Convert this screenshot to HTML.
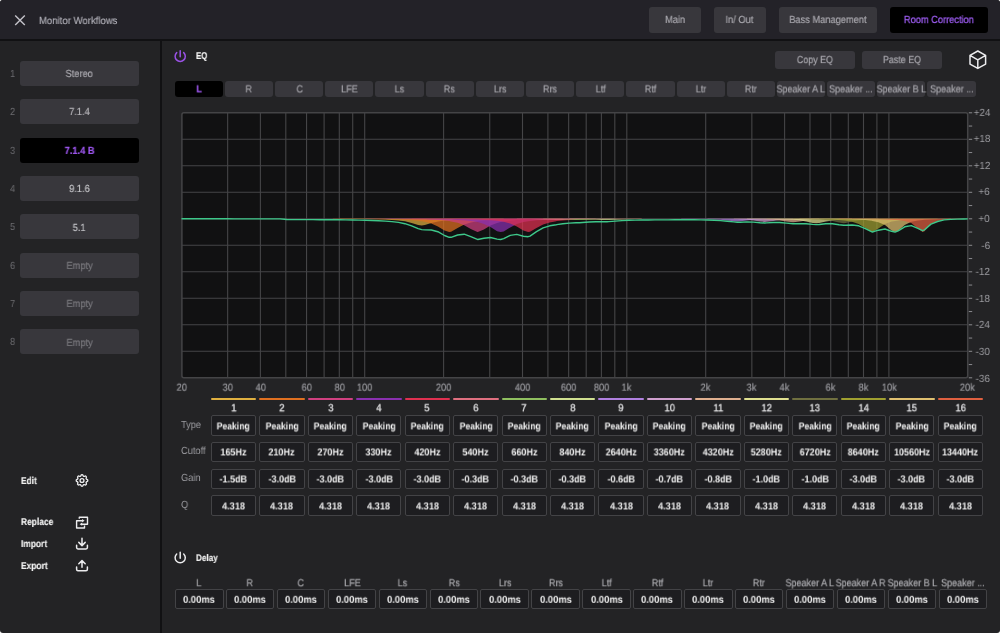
<!DOCTYPE html><html><head><meta charset="utf-8"><style>
html,body{margin:0;padding:0;background:#fff;width:1000px;height:633px;overflow:hidden}
*{box-sizing:border-box}
.win{position:absolute;left:0;top:0;width:1000px;height:633px;text-rendering:geometricPrecision;background:#232325;border-radius:3px;overflow:hidden;font-family:"Liberation Sans",sans-serif;}
.a{position:absolute}
.t{position:absolute;white-space:nowrap;line-height:1;transform-origin:0 0;will-change:transform}
.c{position:absolute;display:flex;align-items:center;justify-content:center;white-space:nowrap}
.c span{display:inline-block;line-height:1;will-change:transform}
.btn{background:#38373c;border-radius:3px;color:#a8a7ad}
.box{border:1px solid #434346;border-radius:2px;background:#1d1d20;color:#f2f2f2;font-weight:700}
.md{-webkit-text-stroke:0.2px currentColor}

</style></head><body><div class="win">
<div class="a" style="left:0;top:0;width:1000px;height:39px;background:#232228"></div>
<div class="a" style="left:0;top:39px;width:1000px;height:2px;background:#111113"></div>
<div class="a" style="left:160px;top:41px;width:2px;height:600px;background:#111113"></div>
<div class="t" style="left:39.30px;top:17.40px;font-size:10.30px;transform:scaleX(0.928);color:#b2b1b9;-webkit-text-stroke:0.15px #b2b1b9">Monitor Workflows</div>
<div class="c btn md" style="left:649.00px;top:7.00px;width:51.50px;height:26.00px;font-size:10.30px;"><span style="transform:translateY(1.00px) scaleX(0.900)">Main</span></div>
<div class="c btn md" style="left:714.00px;top:7.00px;width:51.50px;height:26.00px;font-size:10.30px;"><span style="transform:translateY(1.00px) scaleX(0.900)">In/ Out</span></div>
<div class="c btn md" style="left:778.80px;top:7.00px;width:98.20px;height:26.00px;font-size:10.30px;"><span style="transform:translateY(1.00px) scaleX(0.900)">Bass Management</span></div>
<div class="c btn md" style="left:890.00px;top:7.00px;width:98.00px;height:26.00px;font-size:10.30px;background:#000;color:#9c5cf0;-webkit-text-stroke:0.3px #9c5cf0;"><span style="transform:translateY(1.00px) scaleX(0.900)">Room Correction</span></div>
<div class="t" style="left:10.20px;top:69.80px;font-size:10.30px;transform:scaleX(0.900);color:#6c6c70">1</div>
<div class="c btn md" style="left:20.00px;top:60.80px;width:119.00px;height:25.00px;font-size:10.30px;color:#a8a7ad;"><span style="transform:translateY(2.00px) scaleX(0.900)">Stereo</span></div>
<div class="t" style="left:10.20px;top:108.15px;font-size:10.30px;transform:scaleX(0.900);color:#6c6c70">2</div>
<div class="c btn md" style="left:20.00px;top:99.15px;width:119.00px;height:25.00px;font-size:10.30px;color:#b2b1b6;"><span style="transform:translateY(2.00px) scaleX(0.900)">7.1.4</span></div>
<div class="t" style="left:10.20px;top:146.50px;font-size:10.30px;transform:scaleX(0.900);color:#6c6c70">3</div>
<div class="c btn md" style="left:20.00px;top:137.50px;width:119.00px;height:25.00px;font-size:10.30px;color:#9a55ea;background:#000;font-weight:700;"><span style="transform:translateY(2.00px) scaleX(0.900)">7.1.4 B</span></div>
<div class="t" style="left:10.20px;top:184.85px;font-size:10.30px;transform:scaleX(0.900);color:#6c6c70">4</div>
<div class="c btn md" style="left:20.00px;top:175.85px;width:119.00px;height:25.00px;font-size:10.30px;color:#c2c2c6;"><span style="transform:translateY(2.00px) scaleX(0.900)">9.1.6</span></div>
<div class="t" style="left:10.20px;top:223.20px;font-size:10.30px;transform:scaleX(0.900);color:#6c6c70">5</div>
<div class="c btn md" style="left:20.00px;top:214.20px;width:119.00px;height:25.00px;font-size:10.30px;color:#c2c2c6;"><span style="transform:translateY(2.00px) scaleX(0.900)">5.1</span></div>
<div class="t" style="left:10.20px;top:261.55px;font-size:10.30px;transform:scaleX(0.900);color:#6c6c70">6</div>
<div class="c btn md" style="left:20.00px;top:252.55px;width:119.00px;height:25.00px;font-size:10.30px;color:#7a797e;"><span style="transform:translateY(2.00px) scaleX(0.900)">Empty</span></div>
<div class="t" style="left:10.20px;top:299.90px;font-size:10.30px;transform:scaleX(0.900);color:#6c6c70">7</div>
<div class="c btn md" style="left:20.00px;top:290.90px;width:119.00px;height:25.00px;font-size:10.30px;color:#7a797e;"><span style="transform:translateY(2.00px) scaleX(0.900)">Empty</span></div>
<div class="t" style="left:10.20px;top:338.25px;font-size:10.30px;transform:scaleX(0.900);color:#6c6c70">8</div>
<div class="c btn md" style="left:20.00px;top:329.25px;width:119.00px;height:25.00px;font-size:10.30px;color:#7a797e;"><span style="transform:translateY(2.00px) scaleX(0.900)">Empty</span></div>
<div class="t" style="left:21.20px;top:476.80px;font-size:9.90px;transform:scaleX(0.851);color:#f0f0f0;font-weight:700;-webkit-text-stroke:0.15px #f0f0f0">Edit</div>
<div class="t" style="left:21.20px;top:518.20px;font-size:9.90px;transform:scaleX(0.851);color:#f0f0f0;font-weight:700;-webkit-text-stroke:0.15px #f0f0f0">Replace</div>
<div class="t" style="left:21.20px;top:539.90px;font-size:9.90px;transform:scaleX(0.851);color:#f0f0f0;font-weight:700;-webkit-text-stroke:0.15px #f0f0f0">Import</div>
<div class="t" style="left:21.20px;top:561.60px;font-size:9.90px;transform:scaleX(0.851);color:#f0f0f0;font-weight:700;-webkit-text-stroke:0.15px #f0f0f0">Export</div>
<div class="t" style="left:195.80px;top:52.00px;font-size:9.80px;transform:scaleX(0.800);color:#f6f6f6;font-weight:700;-webkit-text-stroke:0.15px #f6f6f6">EQ</div>
<div class="c btn md" style="left:775.00px;top:51.00px;width:80.00px;height:18.00px;font-size:10.30px;"><span style="transform:translateY(1.10px) scaleX(0.864)">Copy EQ</span></div>
<div class="c btn md" style="left:862.00px;top:51.00px;width:80.00px;height:18.00px;font-size:10.30px;"><span style="transform:translateY(1.10px) scaleX(0.864)">Paste EQ</span></div>
<div class="c btn md" style="left:174.80px;top:80.70px;width:48.20px;height:16.20px;font-size:10.30px;background:#000;color:#9a55ea;font-weight:700;"><span style="transform:translateY(1.40px) scaleX(0.873)">L</span></div>
<div class="c btn md" style="left:224.97px;top:80.70px;width:48.20px;height:16.20px;font-size:10.30px;"><span style="transform:translateY(1.40px) scaleX(0.873)">R</span></div>
<div class="c btn md" style="left:275.14px;top:80.70px;width:48.20px;height:16.20px;font-size:10.30px;"><span style="transform:translateY(1.40px) scaleX(0.873)">C</span></div>
<div class="c btn md" style="left:325.31px;top:80.70px;width:48.20px;height:16.20px;font-size:10.30px;"><span style="transform:translateY(1.40px) scaleX(0.873)">LFE</span></div>
<div class="c btn md" style="left:375.48px;top:80.70px;width:48.20px;height:16.20px;font-size:10.30px;"><span style="transform:translateY(1.40px) scaleX(0.873)">Ls</span></div>
<div class="c btn md" style="left:425.65px;top:80.70px;width:48.20px;height:16.20px;font-size:10.30px;"><span style="transform:translateY(1.40px) scaleX(0.873)">Rs</span></div>
<div class="c btn md" style="left:475.82px;top:80.70px;width:48.20px;height:16.20px;font-size:10.30px;"><span style="transform:translateY(1.40px) scaleX(0.873)">Lrs</span></div>
<div class="c btn md" style="left:525.99px;top:80.70px;width:48.20px;height:16.20px;font-size:10.30px;"><span style="transform:translateY(1.40px) scaleX(0.873)">Rrs</span></div>
<div class="c btn md" style="left:576.16px;top:80.70px;width:48.20px;height:16.20px;font-size:10.30px;"><span style="transform:translateY(1.40px) scaleX(0.873)">Ltf</span></div>
<div class="c btn md" style="left:626.33px;top:80.70px;width:48.20px;height:16.20px;font-size:10.30px;"><span style="transform:translateY(1.40px) scaleX(0.873)">Rtf</span></div>
<div class="c btn md" style="left:676.50px;top:80.70px;width:48.20px;height:16.20px;font-size:10.30px;"><span style="transform:translateY(1.40px) scaleX(0.873)">Ltr</span></div>
<div class="c btn md" style="left:726.67px;top:80.70px;width:48.20px;height:16.20px;font-size:10.30px;"><span style="transform:translateY(1.40px) scaleX(0.873)">Rtr</span></div>
<div class="c btn md" style="left:776.84px;top:80.70px;width:48.20px;height:16.20px;font-size:10.30px;"><span style="transform:translateY(1.40px) scaleX(0.873)">Speaker A L</span></div>
<div class="c btn md" style="left:827.01px;top:80.70px;width:48.20px;height:16.20px;font-size:10.30px;"><span style="transform:translateY(1.40px) scaleX(0.873)">Speaker ...</span></div>
<div class="c btn md" style="left:877.18px;top:80.70px;width:48.20px;height:16.20px;font-size:10.30px;"><span style="transform:translateY(1.40px) scaleX(0.873)">Speaker B L</span></div>
<div class="c btn md" style="left:927.35px;top:80.70px;width:48.20px;height:16.20px;font-size:10.30px;"><span style="transform:translateY(1.40px) scaleX(0.873)">Speaker ...</span></div>
<svg class="a" style="left:0;top:0" width="1000" height="633">
<rect x="181.9" y="112.80" width="785.8" height="265.00" rx="2" fill="#111112" stroke="#444446" stroke-width="1.5"/>
<line x1="227.65" y1="112.80" x2="227.65" y2="377.80" stroke="#454547" stroke-width="1.1"/>
<line x1="260.40" y1="112.80" x2="260.40" y2="377.80" stroke="#454547" stroke-width="1.1"/>
<line x1="285.80" y1="112.80" x2="285.80" y2="377.80" stroke="#454547" stroke-width="1.1"/>
<line x1="306.55" y1="112.80" x2="306.55" y2="377.80" stroke="#454547" stroke-width="1.1"/>
<line x1="324.10" y1="112.80" x2="324.10" y2="377.80" stroke="#454547" stroke-width="1.1"/>
<line x1="339.30" y1="112.80" x2="339.30" y2="377.80" stroke="#454547" stroke-width="1.1"/>
<line x1="352.71" y1="112.80" x2="352.71" y2="377.80" stroke="#454547" stroke-width="1.1"/>
<line x1="364.70" y1="112.80" x2="364.70" y2="377.80" stroke="#454547" stroke-width="1.1"/>
<line x1="443.60" y1="112.80" x2="443.60" y2="377.80" stroke="#454547" stroke-width="1.1"/>
<line x1="489.75" y1="112.80" x2="489.75" y2="377.80" stroke="#454547" stroke-width="1.1"/>
<line x1="522.50" y1="112.80" x2="522.50" y2="377.80" stroke="#454547" stroke-width="1.1"/>
<line x1="547.90" y1="112.80" x2="547.90" y2="377.80" stroke="#454547" stroke-width="1.1"/>
<line x1="568.65" y1="112.80" x2="568.65" y2="377.80" stroke="#454547" stroke-width="1.1"/>
<line x1="586.20" y1="112.80" x2="586.20" y2="377.80" stroke="#454547" stroke-width="1.1"/>
<line x1="601.40" y1="112.80" x2="601.40" y2="377.80" stroke="#454547" stroke-width="1.1"/>
<line x1="614.81" y1="112.80" x2="614.81" y2="377.80" stroke="#454547" stroke-width="1.1"/>
<line x1="626.80" y1="112.80" x2="626.80" y2="377.80" stroke="#454547" stroke-width="1.1"/>
<line x1="705.70" y1="112.80" x2="705.70" y2="377.80" stroke="#454547" stroke-width="1.1"/>
<line x1="751.85" y1="112.80" x2="751.85" y2="377.80" stroke="#454547" stroke-width="1.1"/>
<line x1="784.60" y1="112.80" x2="784.60" y2="377.80" stroke="#454547" stroke-width="1.1"/>
<line x1="810.00" y1="112.80" x2="810.00" y2="377.80" stroke="#454547" stroke-width="1.1"/>
<line x1="830.75" y1="112.80" x2="830.75" y2="377.80" stroke="#454547" stroke-width="1.1"/>
<line x1="848.30" y1="112.80" x2="848.30" y2="377.80" stroke="#454547" stroke-width="1.1"/>
<line x1="863.50" y1="112.80" x2="863.50" y2="377.80" stroke="#454547" stroke-width="1.1"/>
<line x1="876.91" y1="112.80" x2="876.91" y2="377.80" stroke="#454547" stroke-width="1.1"/>
<line x1="888.90" y1="112.80" x2="888.90" y2="377.80" stroke="#454547" stroke-width="1.1"/>
<line x1="182" y1="139.30" x2="967.6" y2="139.30" stroke="#454547" stroke-width="1.1"/>
<line x1="182" y1="165.80" x2="967.6" y2="165.80" stroke="#454547" stroke-width="1.1"/>
<line x1="182" y1="192.30" x2="967.6" y2="192.30" stroke="#454547" stroke-width="1.1"/>
<line x1="182" y1="218.80" x2="967.6" y2="218.80" stroke="#454547" stroke-width="1.1"/>
<line x1="182" y1="245.30" x2="967.6" y2="245.30" stroke="#454547" stroke-width="1.1"/>
<line x1="182" y1="271.80" x2="967.6" y2="271.80" stroke="#454547" stroke-width="1.1"/>
<line x1="182" y1="298.30" x2="967.6" y2="298.30" stroke="#454547" stroke-width="1.1"/>
<line x1="182" y1="324.80" x2="967.6" y2="324.80" stroke="#454547" stroke-width="1.1"/>
<line x1="182" y1="351.30" x2="967.6" y2="351.30" stroke="#454547" stroke-width="1.1"/>
<path d="M339.3,218.8 L339.3,218.9 L345.9,219.0 L352.4,219.0 L359.0,219.1 L365.6,219.1 L372.2,219.2 L378.7,219.3 L385.3,219.5 L391.9,219.9 L398.5,220.4 L405.0,221.3 L411.6,223.0 L418.2,225.0 L421.7,225.4 L424.8,225.1 L431.3,223.1 L437.9,221.4 L444.5,220.4 L449.2,220.0 L451.1,219.9 L457.6,219.6 L464.2,219.4 L470.8,219.2 L477.4,219.1 L477.8,219.1 L483.9,219.1 L490.5,219.0 L497.1,219.0 L500.6,219.0 L503.7,218.9 L503.7,218.8 Z" fill="#e0b040" fill-opacity="0.72"/>
<path d="M332.7,218.8 L332.7,218.9 L339.3,218.9 L345.9,219.0 L352.4,219.0 L359.0,219.0 L365.6,219.1 L372.2,219.1 L378.7,219.2 L385.3,219.3 L391.9,219.4 L398.5,219.6 L405.0,219.9 L411.6,220.2 L418.2,220.8 L421.7,221.3 L424.8,221.8 L431.3,223.5 L437.9,226.5 L444.5,230.6 L449.2,232.1 L451.1,231.8 L457.6,228.1 L464.2,224.5 L470.8,222.4 L477.4,221.2 L477.8,221.1 L483.9,220.4 L490.5,220.0 L497.1,219.7 L500.6,219.6 L503.7,219.5 L510.2,219.3 L516.8,219.2 L523.4,219.2 L528.1,219.1 L530.0,219.1 L536.5,219.0 L543.1,219.0 L549.7,219.0 L556.3,219.0 L556.7,219.0 L562.8,218.9 L562.8,218.8 Z" fill="#e07020" fill-opacity="0.72"/>
<path d="M365.6,218.8 L365.6,218.9 L372.2,219.0 L378.7,219.0 L385.3,219.0 L391.9,219.1 L398.5,219.1 L405.0,219.2 L411.6,219.3 L418.2,219.4 L421.7,219.5 L424.8,219.5 L431.3,219.8 L437.9,220.1 L444.5,220.6 L449.2,221.1 L451.1,221.4 L457.6,222.8 L464.2,225.2 L470.8,229.1 L477.4,232.0 L477.8,232.1 L483.9,229.6 L490.5,225.6 L497.1,223.0 L500.6,222.1 L503.7,221.5 L510.2,220.7 L516.8,220.1 L523.4,219.8 L528.1,219.6 L530.0,219.6 L536.5,219.4 L543.1,219.3 L549.7,219.2 L556.3,219.1 L556.7,219.1 L562.8,219.1 L569.4,219.0 L576.0,219.0 L579.5,219.0 L582.6,219.0 L589.1,218.9 L589.1,218.8 Z" fill="#d04080" fill-opacity="0.72"/>
<path d="M385.3,218.8 L385.3,218.9 L391.9,218.9 L398.5,219.0 L405.0,219.0 L411.6,219.0 L418.2,219.1 L421.7,219.1 L424.8,219.1 L431.3,219.2 L437.9,219.3 L444.5,219.5 L449.2,219.6 L451.1,219.6 L457.6,219.9 L464.2,220.3 L470.8,220.9 L477.4,222.0 L477.8,222.1 L483.9,223.9 L490.5,227.1 L497.1,231.2 L500.6,232.0 L503.7,231.4 L510.2,227.4 L516.8,224.1 L523.4,222.1 L528.1,221.3 L530.0,221.0 L536.5,220.3 L543.1,219.9 L549.7,219.7 L556.3,219.5 L556.7,219.5 L562.8,219.3 L569.4,219.2 L576.0,219.1 L579.5,219.1 L582.6,219.1 L589.1,219.0 L595.7,219.0 L602.3,219.0 L607.0,219.0 L608.9,218.9 L615.4,218.9 L615.4,218.8 Z" fill="#8a30b0" fill-opacity="0.72"/>
<path d="M411.6,218.8 L411.6,218.9 L418.2,218.9 L421.7,219.0 L424.8,219.0 L431.3,219.0 L437.9,219.0 L444.5,219.1 L449.2,219.1 L451.1,219.1 L457.6,219.2 L464.2,219.3 L470.8,219.4 L477.4,219.6 L477.8,219.6 L483.9,219.9 L490.5,220.2 L497.1,220.8 L500.6,221.3 L503.7,221.8 L510.2,223.5 L516.8,226.5 L523.4,230.6 L528.1,232.0 L530.0,231.8 L536.5,228.1 L543.1,224.5 L549.7,222.4 L556.3,221.2 L556.7,221.1 L562.8,220.4 L569.4,220.0 L576.0,219.7 L579.5,219.6 L582.6,219.5 L589.1,219.3 L595.7,219.2 L602.3,219.2 L607.0,219.1 L608.9,219.1 L615.4,219.0 L622.0,219.0 L628.6,219.0 L635.2,219.0 L641.7,218.9 L641.7,218.8 Z" fill="#e03050" fill-opacity="0.72"/>
<path d="M516.8,218.8 L516.8,218.9 L523.4,219.0 L528.1,219.0 L530.0,219.1 L536.5,219.2 L543.1,219.4 L549.7,219.8 L556.3,220.1 L556.7,220.1 L562.8,219.9 L569.4,219.5 L576.0,219.2 L579.5,219.1 L582.6,219.1 L589.1,219.0 L595.7,218.9 L595.7,218.8 Z" fill="#e07080" fill-opacity="0.72"/>
<path d="M543.1,218.8 L543.1,218.9 L549.7,219.0 L556.3,219.1 L556.7,219.1 L562.8,219.3 L569.4,219.6 L576.0,220.0 L579.5,220.1 L582.6,220.1 L589.1,219.7 L595.7,219.3 L602.3,219.1 L607.0,219.0 L608.9,219.0 L615.4,219.0 L615.4,218.8 Z" fill="#90c060" fill-opacity="0.72"/>
<path d="M569.4,218.8 L569.4,218.9 L576.0,219.0 L579.5,219.0 L582.6,219.1 L589.1,219.3 L595.7,219.6 L602.3,220.0 L607.0,220.1 L608.9,220.1 L615.4,219.7 L622.0,219.4 L628.6,219.2 L635.2,219.0 L641.7,219.0 L641.7,218.8 Z" fill="#d0e090" fill-opacity="0.72"/>
<path d="M681.2,218.8 L681.2,218.9 L687.8,219.0 L694.3,219.0 L700.9,219.1 L707.5,219.2 L714.1,219.4 L720.6,219.8 L727.2,220.4 L733.8,221.3 L737.3,221.5 L740.4,221.3 L746.9,220.5 L753.5,219.8 L760.1,219.4 L764.8,219.3 L766.7,219.2 L773.2,219.1 L779.8,219.0 L786.4,219.0 L793.0,218.9 L793.0,218.8 Z" fill="#b080e0" fill-opacity="0.72"/>
<path d="M707.5,218.8 L707.5,218.9 L714.1,219.0 L720.6,219.0 L727.2,219.1 L733.8,219.2 L737.3,219.3 L740.4,219.5 L746.9,219.8 L753.5,220.5 L760.1,221.5 L764.8,221.9 L766.7,221.8 L773.2,220.9 L779.8,220.1 L786.4,219.6 L793.0,219.3 L793.4,219.3 L799.5,219.1 L806.1,219.0 L812.7,219.0 L816.2,219.0 L819.3,218.9 L819.3,218.8 Z" fill="#d0a0d0" fill-opacity="0.72"/>
<path d="M733.8,218.8 L733.8,218.9 L737.3,219.0 L740.4,219.0 L746.9,219.0 L753.5,219.1 L760.1,219.2 L764.8,219.4 L766.7,219.4 L773.2,219.8 L779.8,220.4 L786.4,221.5 L793.0,222.3 L793.4,222.3 L799.5,221.6 L806.1,220.5 L812.7,219.8 L816.2,219.6 L819.3,219.4 L825.8,219.2 L832.4,219.1 L839.0,219.0 L843.7,219.0 L845.6,219.0 L852.1,218.9 L852.1,218.8 Z" fill="#e0b090" fill-opacity="0.72"/>
<path d="M746.9,218.8 L746.9,218.9 L753.5,219.0 L760.1,219.0 L764.8,219.0 L766.7,219.0 L773.2,219.1 L779.8,219.2 L786.4,219.4 L793.0,219.8 L793.4,219.8 L799.5,220.3 L806.1,221.4 L812.7,222.9 L816.2,223.2 L819.3,222.9 L825.8,221.5 L832.4,220.4 L839.0,219.7 L843.7,219.5 L845.6,219.4 L852.1,219.2 L858.7,219.1 L865.3,219.0 L871.9,219.0 L872.3,219.0 L878.4,218.9 L878.4,218.8 Z" fill="#e0e090" fill-opacity="0.72"/>
<path d="M779.8,218.8 L779.8,218.9 L786.4,219.0 L793.0,219.0 L793.4,219.0 L799.5,219.1 L806.1,219.2 L812.7,219.4 L816.2,219.5 L819.3,219.6 L825.8,220.1 L832.4,221.1 L839.0,222.6 L843.7,223.2 L845.6,223.1 L852.1,221.6 L858.7,220.4 L865.3,219.7 L871.9,219.4 L872.3,219.4 L878.4,219.2 L885.0,219.1 L891.6,219.0 L895.1,219.0 L898.2,218.9 L898.2,218.8 Z" fill="#707040" fill-opacity="0.72"/>
<path d="M766.7,218.8 L766.7,218.9 L773.2,218.9 L779.8,219.0 L786.4,219.0 L793.0,219.0 L793.4,219.0 L799.5,219.1 L806.1,219.1 L812.7,219.2 L816.2,219.3 L819.3,219.3 L825.8,219.5 L832.4,219.7 L839.0,220.1 L843.7,220.5 L845.6,220.7 L852.1,221.8 L858.7,224.0 L865.3,228.1 L871.9,232.0 L872.3,232.1 L878.4,228.6 L885.0,224.0 L891.6,221.6 L895.1,220.9 L898.2,220.5 L904.7,219.8 L911.3,219.5 L917.9,219.3 L922.6,219.2 L924.5,219.1 L931.0,219.0 L937.6,219.0 L937.6,218.8 Z" fill="#a0a030" fill-opacity="0.72"/>
<path d="M799.5,218.8 L799.5,218.9 L806.1,219.0 L812.7,219.0 L816.2,219.0 L819.3,219.0 L825.8,219.1 L832.4,219.1 L839.0,219.2 L843.7,219.3 L845.6,219.3 L852.1,219.5 L858.7,219.7 L865.3,220.1 L871.9,220.8 L872.3,220.9 L878.4,222.2 L885.0,225.1 L891.6,230.4 L895.1,232.0 L898.2,230.7 L904.7,225.0 L911.3,221.8 L917.9,220.4 L922.6,219.9 L924.5,219.7 L931.0,219.4 L937.6,219.2 L944.2,219.0 L950.8,219.0 L950.8,218.8 Z" fill="#e0c070" fill-opacity="0.72"/>
<path d="M839.0,218.8 L839.0,218.9 L843.7,219.0 L845.6,219.0 L852.1,219.0 L858.7,219.0 L865.3,219.1 L871.9,219.2 L872.3,219.2 L878.4,219.3 L885.0,219.4 L891.6,219.7 L895.1,219.9 L898.2,220.1 L904.7,221.0 L911.3,223.1 L917.9,228.4 L922.6,232.0 L924.5,231.2 L931.0,224.1 L937.6,220.9 L944.2,219.8 L950.8,219.3 L957.3,219.1 L963.9,218.9 L963.9,218.8 Z" fill="#e06040" fill-opacity="0.72"/>
<path d="M181.5,218.8 L188.1,218.8 L194.6,218.8 L201.2,218.8 L207.8,218.8 L214.4,218.8 L220.9,218.8 L227.5,218.8 L234.1,218.9 L240.7,218.9 L247.2,218.9 L253.8,218.9 L260.4,218.9 L267.0,218.9 L273.5,218.9 L280.1,218.9 L286.7,219.5 L293.3,219.6 L299.8,219.6 L306.4,219.6 L313.0,219.6 L319.6,219.7 L326.1,219.7 L332.7,219.8 L339.3,219.8 L345.9,219.9 L352.4,220.0 L359.0,220.1 L365.6,220.3 L372.2,220.5 L378.7,220.7 L385.3,221.1 L391.9,221.6 L398.5,222.4 L405.0,223.7 L411.6,225.8 L418.2,228.6 L421.7,229.6 L424.8,229.9 L431.3,230.0 L437.9,231.7 L444.5,235.5 L449.2,237.3 L451.1,237.3 L457.6,235.0 L464.2,234.2 L470.8,236.6 L477.4,239.4 L477.8,239.5 L483.9,238.3 L490.5,237.5 L497.1,239.1 L500.6,239.5 L503.7,238.6 L510.2,235.4 L516.8,234.4 L523.4,236.2 L528.1,236.7 L530.0,236.1 L536.5,231.7 L543.1,227.9 L549.7,225.8 L556.3,224.7 L556.7,224.6 L562.8,223.7 L569.4,223.1 L576.0,222.8 L579.5,222.7 L582.6,222.5 L589.1,222.0 L595.7,221.7 L602.3,221.8 L607.0,221.7 L608.9,221.6 L615.4,221.1 L622.0,220.6 L628.6,220.3 L635.2,220.1 L641.7,220.0 L648.3,220.0 L654.9,219.9 L661.5,219.9 L668.0,219.9 L674.6,219.8 L681.2,219.8 L687.8,219.8 L694.3,219.8 L700.9,219.9 L707.5,220.0 L714.1,220.3 L720.6,220.6 L727.2,221.2 L733.8,221.9 L737.3,222.2 L740.4,222.2 L746.9,221.9 L753.5,222.1 L760.1,222.7 L764.8,223.0 L766.7,222.9 L773.2,222.5 L779.8,222.5 L786.4,223.1 L793.0,223.8 L793.4,223.8 L799.5,223.7 L806.1,223.7 L812.7,224.4 L816.2,224.6 L819.3,224.5 L825.8,223.7 L832.4,223.7 L839.0,224.7 L843.7,225.3 L845.6,225.3 L852.1,225.0 L858.7,225.8 L865.3,228.7 L871.9,231.9 L872.3,232.0 L878.4,230.2 L885.0,229.0 L891.6,231.3 L895.1,232.1 L898.2,230.9 L904.7,226.8 L911.3,225.6 L917.9,228.4 L922.6,230.7 L924.5,229.8 L931.0,224.1 L937.6,221.5 L944.2,219.9 L950.8,219.4 L957.3,219.1 L963.9,219.0 L967.8,218.9" fill="none" stroke="#3ec88a" stroke-width="1.4" stroke-linejoin="round"/>
<line x1="968.8" y1="112.80" x2="972.2" y2="112.80" stroke="#8a8a8e" stroke-width="1"/>
<line x1="968.8" y1="126.05" x2="972.2" y2="126.05" stroke="#8a8a8e" stroke-width="1"/>
<line x1="968.8" y1="139.30" x2="972.2" y2="139.30" stroke="#8a8a8e" stroke-width="1"/>
<line x1="968.8" y1="152.55" x2="972.2" y2="152.55" stroke="#8a8a8e" stroke-width="1"/>
<line x1="968.8" y1="165.80" x2="972.2" y2="165.80" stroke="#8a8a8e" stroke-width="1"/>
<line x1="968.8" y1="179.05" x2="972.2" y2="179.05" stroke="#8a8a8e" stroke-width="1"/>
<line x1="968.8" y1="192.30" x2="972.2" y2="192.30" stroke="#8a8a8e" stroke-width="1"/>
<line x1="968.8" y1="205.55" x2="972.2" y2="205.55" stroke="#8a8a8e" stroke-width="1"/>
<line x1="968.8" y1="218.80" x2="972.2" y2="218.80" stroke="#8a8a8e" stroke-width="1"/>
<line x1="968.8" y1="232.05" x2="972.2" y2="232.05" stroke="#8a8a8e" stroke-width="1"/>
<line x1="968.8" y1="245.30" x2="972.2" y2="245.30" stroke="#8a8a8e" stroke-width="1"/>
<line x1="968.8" y1="258.55" x2="972.2" y2="258.55" stroke="#8a8a8e" stroke-width="1"/>
<line x1="968.8" y1="271.80" x2="972.2" y2="271.80" stroke="#8a8a8e" stroke-width="1"/>
<line x1="968.8" y1="285.05" x2="972.2" y2="285.05" stroke="#8a8a8e" stroke-width="1"/>
<line x1="968.8" y1="298.30" x2="972.2" y2="298.30" stroke="#8a8a8e" stroke-width="1"/>
<line x1="968.8" y1="311.55" x2="972.2" y2="311.55" stroke="#8a8a8e" stroke-width="1"/>
<line x1="968.8" y1="324.80" x2="972.2" y2="324.80" stroke="#8a8a8e" stroke-width="1"/>
<line x1="968.8" y1="338.05" x2="972.2" y2="338.05" stroke="#8a8a8e" stroke-width="1"/>
<line x1="968.8" y1="351.30" x2="972.2" y2="351.30" stroke="#8a8a8e" stroke-width="1"/>
<line x1="968.8" y1="364.55" x2="972.2" y2="364.55" stroke="#8a8a8e" stroke-width="1"/>
<line x1="968.8" y1="377.80" x2="972.2" y2="377.80" stroke="#8a8a8e" stroke-width="1"/>
<path d="M15.2,15.5 L24.8,25 M24.8,15.5 L15.2,25" stroke="#c4c3ca" stroke-width="1.4"/>
<path fill="none" stroke="#9a52e6" stroke-width="1.5" stroke-linecap="round" d="M180.2,50.8 V56.8 M176.7,52.6 A5.1,5.1 0 1 0 183.7,52.6"/>
<path fill="none" stroke="#ececee" stroke-width="1.5" stroke-linecap="round" d="M180.2,552.2 V558.2 M176.7,554 A5.1,5.1 0 1 0 183.7,554"/>
<path fill="none" stroke="#ececee" stroke-width="1.5" stroke-linejoin="round" d="M977.8,51 L985.6,55.4 L985.6,64.1 L977.8,68.4 L970,64.1 L970,55.4 Z M970,55.4 L977.8,59.8 L985.6,55.4 M977.8,59.8 V68.4"/>
<g transform="translate(74.26,472.76) scale(0.645)"><path fill="none" stroke="#ececee" stroke-width="2.09" d="M10.325 4.317c.426 -1.756 2.924 -1.756 3.35 0a1.724 1.724 0 0 0 2.573 1.066c1.543 -.94 3.31 .826 2.37 2.37a1.724 1.724 0 0 0 1.065 2.572c1.756 .426 1.756 2.924 0 3.35a1.724 1.724 0 0 0 -1.066 2.573c.94 1.543 -.826 3.31 -2.37 2.37a1.724 1.724 0 0 0 -2.572 1.065c-.426 1.756 -2.924 1.756 -3.35 0a1.724 1.724 0 0 0 -2.573 -1.066c-1.543 .94 -3.31 -.826 -2.37 -2.37a1.724 1.724 0 0 0 -1.065 -2.572c-1.756 -.426 -1.756 -2.924 0 -3.35a1.724 1.724 0 0 0 1.066 -2.573c-.94 -1.543 .826 -3.31 2.37 -2.37c1 .608 2.296 .07 2.572 -1.065z"/><circle cx="12" cy="12" r="3" fill="none" stroke="#ececee" stroke-width="2.09"/></g>
<path fill="none" stroke="#ececee" stroke-width="1.4" stroke-linejoin="round" d="M79.3,518.8 V517.3 H87.5 V524.2 H81.5 M84.5,525.5 V528 H76.6 V520.7 H82.8"/>
<path fill="#ececee" d="M79.6,524.2 L82.2,522.6 L82.2,525.8 Z M84.6,520.7 L82.1,519.1 L82.1,522.3 Z"/>
<path fill="none" stroke="#ececee" stroke-width="1.5" stroke-linecap="round" stroke-linejoin="round" d="M82,538.3 V545.5 M78.8,542.4 L82,545.6 L85.2,542.4 M76.6,545.3 V547.6 Q76.6,549 78,549 H86 Q87.4,549 87.4,547.6 V545.3"/>
<path fill="none" stroke="#ececee" stroke-width="1.5" stroke-linecap="round" stroke-linejoin="round" d="M82,567.3 V560.6 M78.8,563.8 L82,560.6 L85.2,563.8 M76.6,567 V569.3 Q76.6,570.8 78,570.8 H86 Q87.4,570.8 87.4,569.3 V567"/>
</svg>
<div class="c" style="left:950px;top:106.80px;width:40.2px;height:12px;justify-content:flex-end;font-size:10.30px;color:#9c9ca1"><span style="transform-origin:100% 50%;transform:translateY(1.0px) scaleX(0.963)">+24</span></div>
<div class="c" style="left:950px;top:133.40px;width:40.2px;height:12px;justify-content:flex-end;font-size:10.30px;color:#9c9ca1"><span style="transform-origin:100% 50%;transform:translateY(1.0px) scaleX(0.963)">+18</span></div>
<div class="c" style="left:950px;top:160.00px;width:40.2px;height:12px;justify-content:flex-end;font-size:10.30px;color:#9c9ca1"><span style="transform-origin:100% 50%;transform:translateY(1.0px) scaleX(0.963)">+12</span></div>
<div class="c" style="left:950px;top:186.60px;width:40.2px;height:12px;justify-content:flex-end;font-size:10.30px;color:#9c9ca1"><span style="transform-origin:100% 50%;transform:translateY(1.0px) scaleX(0.963)">+6</span></div>
<div class="c" style="left:950px;top:213.20px;width:40.2px;height:12px;justify-content:flex-end;font-size:10.30px;color:#9c9ca1"><span style="transform-origin:100% 50%;transform:translateY(1.0px) scaleX(0.963)">+0</span></div>
<div class="c" style="left:950px;top:239.80px;width:40.2px;height:12px;justify-content:flex-end;font-size:10.30px;color:#9c9ca1"><span style="transform-origin:100% 50%;transform:translateY(1.0px) scaleX(0.963)">-6</span></div>
<div class="c" style="left:950px;top:266.40px;width:40.2px;height:12px;justify-content:flex-end;font-size:10.30px;color:#9c9ca1"><span style="transform-origin:100% 50%;transform:translateY(1.0px) scaleX(0.963)">-12</span></div>
<div class="c" style="left:950px;top:293.00px;width:40.2px;height:12px;justify-content:flex-end;font-size:10.30px;color:#9c9ca1"><span style="transform-origin:100% 50%;transform:translateY(1.0px) scaleX(0.963)">-18</span></div>
<div class="c" style="left:950px;top:319.60px;width:40.2px;height:12px;justify-content:flex-end;font-size:10.30px;color:#9c9ca1"><span style="transform-origin:100% 50%;transform:translateY(1.0px) scaleX(0.963)">-24</span></div>
<div class="c" style="left:950px;top:346.20px;width:40.2px;height:12px;justify-content:flex-end;font-size:10.30px;color:#9c9ca1"><span style="transform-origin:100% 50%;transform:translateY(1.0px) scaleX(0.963)">-30</span></div>
<div class="c" style="left:950px;top:372.80px;width:40.2px;height:12px;justify-content:flex-end;font-size:10.30px;color:#9c9ca1"><span style="transform-origin:100% 50%;transform:translateY(1.0px) scaleX(0.963)">-36</span></div>
<div class="c md" style="left:161.50px;top:381.00px;width:40.00px;height:12.00px;font-size:10.30px;color:#9c9ca1"><span style="transform:translateY(1.70px) scaleX(0.900)">20</span></div>
<div class="c md" style="left:207.65px;top:381.00px;width:40.00px;height:12.00px;font-size:10.30px;color:#9c9ca1"><span style="transform:translateY(1.70px) scaleX(0.900)">30</span></div>
<div class="c md" style="left:240.40px;top:381.00px;width:40.00px;height:12.00px;font-size:10.30px;color:#9c9ca1"><span style="transform:translateY(1.70px) scaleX(0.900)">40</span></div>
<div class="c md" style="left:286.55px;top:381.00px;width:40.00px;height:12.00px;font-size:10.30px;color:#9c9ca1"><span style="transform:translateY(1.70px) scaleX(0.900)">60</span></div>
<div class="c md" style="left:319.30px;top:381.00px;width:40.00px;height:12.00px;font-size:10.30px;color:#9c9ca1"><span style="transform:translateY(1.70px) scaleX(0.900)">80</span></div>
<div class="c md" style="left:344.70px;top:381.00px;width:40.00px;height:12.00px;font-size:10.30px;color:#9c9ca1"><span style="transform:translateY(1.70px) scaleX(0.900)">100</span></div>
<div class="c md" style="left:423.60px;top:381.00px;width:40.00px;height:12.00px;font-size:10.30px;color:#9c9ca1"><span style="transform:translateY(1.70px) scaleX(0.900)">200</span></div>
<div class="c md" style="left:502.50px;top:381.00px;width:40.00px;height:12.00px;font-size:10.30px;color:#9c9ca1"><span style="transform:translateY(1.70px) scaleX(0.900)">400</span></div>
<div class="c md" style="left:548.65px;top:381.00px;width:40.00px;height:12.00px;font-size:10.30px;color:#9c9ca1"><span style="transform:translateY(1.70px) scaleX(0.900)">600</span></div>
<div class="c md" style="left:581.40px;top:381.00px;width:40.00px;height:12.00px;font-size:10.30px;color:#9c9ca1"><span style="transform:translateY(1.70px) scaleX(0.900)">800</span></div>
<div class="c md" style="left:606.80px;top:381.00px;width:40.00px;height:12.00px;font-size:10.30px;color:#9c9ca1"><span style="transform:translateY(1.70px) scaleX(0.900)">1k</span></div>
<div class="c md" style="left:685.70px;top:381.00px;width:40.00px;height:12.00px;font-size:10.30px;color:#9c9ca1"><span style="transform:translateY(1.70px) scaleX(0.900)">2k</span></div>
<div class="c md" style="left:731.85px;top:381.00px;width:40.00px;height:12.00px;font-size:10.30px;color:#9c9ca1"><span style="transform:translateY(1.70px) scaleX(0.900)">3k</span></div>
<div class="c md" style="left:764.60px;top:381.00px;width:40.00px;height:12.00px;font-size:10.30px;color:#9c9ca1"><span style="transform:translateY(1.70px) scaleX(0.900)">4k</span></div>
<div class="c md" style="left:810.75px;top:381.00px;width:40.00px;height:12.00px;font-size:10.30px;color:#9c9ca1"><span style="transform:translateY(1.70px) scaleX(0.900)">6k</span></div>
<div class="c md" style="left:843.50px;top:381.00px;width:40.00px;height:12.00px;font-size:10.30px;color:#9c9ca1"><span style="transform:translateY(1.70px) scaleX(0.900)">8k</span></div>
<div class="c md" style="left:868.90px;top:381.00px;width:40.00px;height:12.00px;font-size:10.30px;color:#9c9ca1"><span style="transform:translateY(1.70px) scaleX(0.900)">10k</span></div>
<div class="c md" style="left:947.80px;top:381.00px;width:40.00px;height:12.00px;font-size:10.30px;color:#9c9ca1"><span style="transform:translateY(1.70px) scaleX(0.900)">20k</span></div>
<div class="a" style="left:210.80px;top:397.8px;width:45.5px;height:2.4px;border-radius:1.2px;background:#e0b040"></div>
<div class="c " style="left:210.80px;top:402.00px;width:45.50px;height:12.00px;font-size:10.30px;color:#e2e2e4;-webkit-text-stroke:0.3px #e2e2e4"><span style="transform:translateY(1.20px) scaleX(0.900)">1</span></div>
<div class="c box" style="left:210.80px;top:415.40px;width:45.30px;height:20.40px;font-size:10.00px;"><span style="transform:translateY(1.40px) scaleX(0.860)">Peaking</span></div>
<div class="c box" style="left:210.80px;top:442.10px;width:45.30px;height:20.40px;font-size:10.00px;"><span style="transform:translateY(1.40px) scaleX(0.900)">165Hz</span></div>
<div class="c box" style="left:210.80px;top:468.80px;width:45.30px;height:20.40px;font-size:10.00px;"><span style="transform:translateY(1.40px) scaleX(0.900)">-1.5dB</span></div>
<div class="c box" style="left:210.80px;top:495.40px;width:45.30px;height:20.40px;font-size:10.00px;"><span style="transform:translateY(1.40px) scaleX(0.920)">4.318</span></div>
<div class="a" style="left:259.25px;top:397.8px;width:45.5px;height:2.4px;border-radius:1.2px;background:#e07020"></div>
<div class="c " style="left:259.25px;top:402.00px;width:45.50px;height:12.00px;font-size:10.30px;color:#e2e2e4;-webkit-text-stroke:0.3px #e2e2e4"><span style="transform:translateY(1.20px) scaleX(0.900)">2</span></div>
<div class="c box" style="left:259.25px;top:415.40px;width:45.30px;height:20.40px;font-size:10.00px;"><span style="transform:translateY(1.40px) scaleX(0.860)">Peaking</span></div>
<div class="c box" style="left:259.25px;top:442.10px;width:45.30px;height:20.40px;font-size:10.00px;"><span style="transform:translateY(1.40px) scaleX(0.900)">210Hz</span></div>
<div class="c box" style="left:259.25px;top:468.80px;width:45.30px;height:20.40px;font-size:10.00px;"><span style="transform:translateY(1.40px) scaleX(0.900)">-3.0dB</span></div>
<div class="c box" style="left:259.25px;top:495.40px;width:45.30px;height:20.40px;font-size:10.00px;"><span style="transform:translateY(1.40px) scaleX(0.920)">4.318</span></div>
<div class="a" style="left:307.70px;top:397.8px;width:45.5px;height:2.4px;border-radius:1.2px;background:#d04080"></div>
<div class="c " style="left:307.70px;top:402.00px;width:45.50px;height:12.00px;font-size:10.30px;color:#e2e2e4;-webkit-text-stroke:0.3px #e2e2e4"><span style="transform:translateY(1.20px) scaleX(0.900)">3</span></div>
<div class="c box" style="left:307.70px;top:415.40px;width:45.30px;height:20.40px;font-size:10.00px;"><span style="transform:translateY(1.40px) scaleX(0.860)">Peaking</span></div>
<div class="c box" style="left:307.70px;top:442.10px;width:45.30px;height:20.40px;font-size:10.00px;"><span style="transform:translateY(1.40px) scaleX(0.900)">270Hz</span></div>
<div class="c box" style="left:307.70px;top:468.80px;width:45.30px;height:20.40px;font-size:10.00px;"><span style="transform:translateY(1.40px) scaleX(0.900)">-3.0dB</span></div>
<div class="c box" style="left:307.70px;top:495.40px;width:45.30px;height:20.40px;font-size:10.00px;"><span style="transform:translateY(1.40px) scaleX(0.920)">4.318</span></div>
<div class="a" style="left:356.15px;top:397.8px;width:45.5px;height:2.4px;border-radius:1.2px;background:#8a30b0"></div>
<div class="c " style="left:356.15px;top:402.00px;width:45.50px;height:12.00px;font-size:10.30px;color:#e2e2e4;-webkit-text-stroke:0.3px #e2e2e4"><span style="transform:translateY(1.20px) scaleX(0.900)">4</span></div>
<div class="c box" style="left:356.15px;top:415.40px;width:45.30px;height:20.40px;font-size:10.00px;"><span style="transform:translateY(1.40px) scaleX(0.860)">Peaking</span></div>
<div class="c box" style="left:356.15px;top:442.10px;width:45.30px;height:20.40px;font-size:10.00px;"><span style="transform:translateY(1.40px) scaleX(0.900)">330Hz</span></div>
<div class="c box" style="left:356.15px;top:468.80px;width:45.30px;height:20.40px;font-size:10.00px;"><span style="transform:translateY(1.40px) scaleX(0.900)">-3.0dB</span></div>
<div class="c box" style="left:356.15px;top:495.40px;width:45.30px;height:20.40px;font-size:10.00px;"><span style="transform:translateY(1.40px) scaleX(0.920)">4.318</span></div>
<div class="a" style="left:404.60px;top:397.8px;width:45.5px;height:2.4px;border-radius:1.2px;background:#e03050"></div>
<div class="c " style="left:404.60px;top:402.00px;width:45.50px;height:12.00px;font-size:10.30px;color:#e2e2e4;-webkit-text-stroke:0.3px #e2e2e4"><span style="transform:translateY(1.20px) scaleX(0.900)">5</span></div>
<div class="c box" style="left:404.60px;top:415.40px;width:45.30px;height:20.40px;font-size:10.00px;"><span style="transform:translateY(1.40px) scaleX(0.860)">Peaking</span></div>
<div class="c box" style="left:404.60px;top:442.10px;width:45.30px;height:20.40px;font-size:10.00px;"><span style="transform:translateY(1.40px) scaleX(0.900)">420Hz</span></div>
<div class="c box" style="left:404.60px;top:468.80px;width:45.30px;height:20.40px;font-size:10.00px;"><span style="transform:translateY(1.40px) scaleX(0.900)">-3.0dB</span></div>
<div class="c box" style="left:404.60px;top:495.40px;width:45.30px;height:20.40px;font-size:10.00px;"><span style="transform:translateY(1.40px) scaleX(0.920)">4.318</span></div>
<div class="a" style="left:453.05px;top:397.8px;width:45.5px;height:2.4px;border-radius:1.2px;background:#e07080"></div>
<div class="c " style="left:453.05px;top:402.00px;width:45.50px;height:12.00px;font-size:10.30px;color:#e2e2e4;-webkit-text-stroke:0.3px #e2e2e4"><span style="transform:translateY(1.20px) scaleX(0.900)">6</span></div>
<div class="c box" style="left:453.05px;top:415.40px;width:45.30px;height:20.40px;font-size:10.00px;"><span style="transform:translateY(1.40px) scaleX(0.860)">Peaking</span></div>
<div class="c box" style="left:453.05px;top:442.10px;width:45.30px;height:20.40px;font-size:10.00px;"><span style="transform:translateY(1.40px) scaleX(0.900)">540Hz</span></div>
<div class="c box" style="left:453.05px;top:468.80px;width:45.30px;height:20.40px;font-size:10.00px;"><span style="transform:translateY(1.40px) scaleX(0.900)">-0.3dB</span></div>
<div class="c box" style="left:453.05px;top:495.40px;width:45.30px;height:20.40px;font-size:10.00px;"><span style="transform:translateY(1.40px) scaleX(0.920)">4.318</span></div>
<div class="a" style="left:501.50px;top:397.8px;width:45.5px;height:2.4px;border-radius:1.2px;background:#90c060"></div>
<div class="c " style="left:501.50px;top:402.00px;width:45.50px;height:12.00px;font-size:10.30px;color:#e2e2e4;-webkit-text-stroke:0.3px #e2e2e4"><span style="transform:translateY(1.20px) scaleX(0.900)">7</span></div>
<div class="c box" style="left:501.50px;top:415.40px;width:45.30px;height:20.40px;font-size:10.00px;"><span style="transform:translateY(1.40px) scaleX(0.860)">Peaking</span></div>
<div class="c box" style="left:501.50px;top:442.10px;width:45.30px;height:20.40px;font-size:10.00px;"><span style="transform:translateY(1.40px) scaleX(0.900)">660Hz</span></div>
<div class="c box" style="left:501.50px;top:468.80px;width:45.30px;height:20.40px;font-size:10.00px;"><span style="transform:translateY(1.40px) scaleX(0.900)">-0.3dB</span></div>
<div class="c box" style="left:501.50px;top:495.40px;width:45.30px;height:20.40px;font-size:10.00px;"><span style="transform:translateY(1.40px) scaleX(0.920)">4.318</span></div>
<div class="a" style="left:549.95px;top:397.8px;width:45.5px;height:2.4px;border-radius:1.2px;background:#d0e090"></div>
<div class="c " style="left:549.95px;top:402.00px;width:45.50px;height:12.00px;font-size:10.30px;color:#e2e2e4;-webkit-text-stroke:0.3px #e2e2e4"><span style="transform:translateY(1.20px) scaleX(0.900)">8</span></div>
<div class="c box" style="left:549.95px;top:415.40px;width:45.30px;height:20.40px;font-size:10.00px;"><span style="transform:translateY(1.40px) scaleX(0.860)">Peaking</span></div>
<div class="c box" style="left:549.95px;top:442.10px;width:45.30px;height:20.40px;font-size:10.00px;"><span style="transform:translateY(1.40px) scaleX(0.900)">840Hz</span></div>
<div class="c box" style="left:549.95px;top:468.80px;width:45.30px;height:20.40px;font-size:10.00px;"><span style="transform:translateY(1.40px) scaleX(0.900)">-0.3dB</span></div>
<div class="c box" style="left:549.95px;top:495.40px;width:45.30px;height:20.40px;font-size:10.00px;"><span style="transform:translateY(1.40px) scaleX(0.920)">4.318</span></div>
<div class="a" style="left:598.40px;top:397.8px;width:45.5px;height:2.4px;border-radius:1.2px;background:#b080e0"></div>
<div class="c " style="left:598.40px;top:402.00px;width:45.50px;height:12.00px;font-size:10.30px;color:#e2e2e4;-webkit-text-stroke:0.3px #e2e2e4"><span style="transform:translateY(1.20px) scaleX(0.900)">9</span></div>
<div class="c box" style="left:598.40px;top:415.40px;width:45.30px;height:20.40px;font-size:10.00px;"><span style="transform:translateY(1.40px) scaleX(0.860)">Peaking</span></div>
<div class="c box" style="left:598.40px;top:442.10px;width:45.30px;height:20.40px;font-size:10.00px;"><span style="transform:translateY(1.40px) scaleX(0.900)">2640Hz</span></div>
<div class="c box" style="left:598.40px;top:468.80px;width:45.30px;height:20.40px;font-size:10.00px;"><span style="transform:translateY(1.40px) scaleX(0.900)">-0.6dB</span></div>
<div class="c box" style="left:598.40px;top:495.40px;width:45.30px;height:20.40px;font-size:10.00px;"><span style="transform:translateY(1.40px) scaleX(0.920)">4.318</span></div>
<div class="a" style="left:646.85px;top:397.8px;width:45.5px;height:2.4px;border-radius:1.2px;background:#d0a0d0"></div>
<div class="c " style="left:646.85px;top:402.00px;width:45.50px;height:12.00px;font-size:10.30px;color:#e2e2e4;-webkit-text-stroke:0.3px #e2e2e4"><span style="transform:translateY(1.20px) scaleX(0.900)">10</span></div>
<div class="c box" style="left:646.85px;top:415.40px;width:45.30px;height:20.40px;font-size:10.00px;"><span style="transform:translateY(1.40px) scaleX(0.860)">Peaking</span></div>
<div class="c box" style="left:646.85px;top:442.10px;width:45.30px;height:20.40px;font-size:10.00px;"><span style="transform:translateY(1.40px) scaleX(0.900)">3360Hz</span></div>
<div class="c box" style="left:646.85px;top:468.80px;width:45.30px;height:20.40px;font-size:10.00px;"><span style="transform:translateY(1.40px) scaleX(0.900)">-0.7dB</span></div>
<div class="c box" style="left:646.85px;top:495.40px;width:45.30px;height:20.40px;font-size:10.00px;"><span style="transform:translateY(1.40px) scaleX(0.920)">4.318</span></div>
<div class="a" style="left:695.30px;top:397.8px;width:45.5px;height:2.4px;border-radius:1.2px;background:#e0b090"></div>
<div class="c " style="left:695.30px;top:402.00px;width:45.50px;height:12.00px;font-size:10.30px;color:#e2e2e4;-webkit-text-stroke:0.3px #e2e2e4"><span style="transform:translateY(1.20px) scaleX(0.900)">11</span></div>
<div class="c box" style="left:695.30px;top:415.40px;width:45.30px;height:20.40px;font-size:10.00px;"><span style="transform:translateY(1.40px) scaleX(0.860)">Peaking</span></div>
<div class="c box" style="left:695.30px;top:442.10px;width:45.30px;height:20.40px;font-size:10.00px;"><span style="transform:translateY(1.40px) scaleX(0.900)">4320Hz</span></div>
<div class="c box" style="left:695.30px;top:468.80px;width:45.30px;height:20.40px;font-size:10.00px;"><span style="transform:translateY(1.40px) scaleX(0.900)">-0.8dB</span></div>
<div class="c box" style="left:695.30px;top:495.40px;width:45.30px;height:20.40px;font-size:10.00px;"><span style="transform:translateY(1.40px) scaleX(0.920)">4.318</span></div>
<div class="a" style="left:743.75px;top:397.8px;width:45.5px;height:2.4px;border-radius:1.2px;background:#e0e090"></div>
<div class="c " style="left:743.75px;top:402.00px;width:45.50px;height:12.00px;font-size:10.30px;color:#e2e2e4;-webkit-text-stroke:0.3px #e2e2e4"><span style="transform:translateY(1.20px) scaleX(0.900)">12</span></div>
<div class="c box" style="left:743.75px;top:415.40px;width:45.30px;height:20.40px;font-size:10.00px;"><span style="transform:translateY(1.40px) scaleX(0.860)">Peaking</span></div>
<div class="c box" style="left:743.75px;top:442.10px;width:45.30px;height:20.40px;font-size:10.00px;"><span style="transform:translateY(1.40px) scaleX(0.900)">5280Hz</span></div>
<div class="c box" style="left:743.75px;top:468.80px;width:45.30px;height:20.40px;font-size:10.00px;"><span style="transform:translateY(1.40px) scaleX(0.900)">-1.0dB</span></div>
<div class="c box" style="left:743.75px;top:495.40px;width:45.30px;height:20.40px;font-size:10.00px;"><span style="transform:translateY(1.40px) scaleX(0.920)">4.318</span></div>
<div class="a" style="left:792.20px;top:397.8px;width:45.5px;height:2.4px;border-radius:1.2px;background:#707040"></div>
<div class="c " style="left:792.20px;top:402.00px;width:45.50px;height:12.00px;font-size:10.30px;color:#e2e2e4;-webkit-text-stroke:0.3px #e2e2e4"><span style="transform:translateY(1.20px) scaleX(0.900)">13</span></div>
<div class="c box" style="left:792.20px;top:415.40px;width:45.30px;height:20.40px;font-size:10.00px;"><span style="transform:translateY(1.40px) scaleX(0.860)">Peaking</span></div>
<div class="c box" style="left:792.20px;top:442.10px;width:45.30px;height:20.40px;font-size:10.00px;"><span style="transform:translateY(1.40px) scaleX(0.900)">6720Hz</span></div>
<div class="c box" style="left:792.20px;top:468.80px;width:45.30px;height:20.40px;font-size:10.00px;"><span style="transform:translateY(1.40px) scaleX(0.900)">-1.0dB</span></div>
<div class="c box" style="left:792.20px;top:495.40px;width:45.30px;height:20.40px;font-size:10.00px;"><span style="transform:translateY(1.40px) scaleX(0.920)">4.318</span></div>
<div class="a" style="left:840.65px;top:397.8px;width:45.5px;height:2.4px;border-radius:1.2px;background:#a0a030"></div>
<div class="c " style="left:840.65px;top:402.00px;width:45.50px;height:12.00px;font-size:10.30px;color:#e2e2e4;-webkit-text-stroke:0.3px #e2e2e4"><span style="transform:translateY(1.20px) scaleX(0.900)">14</span></div>
<div class="c box" style="left:840.65px;top:415.40px;width:45.30px;height:20.40px;font-size:10.00px;"><span style="transform:translateY(1.40px) scaleX(0.860)">Peaking</span></div>
<div class="c box" style="left:840.65px;top:442.10px;width:45.30px;height:20.40px;font-size:10.00px;"><span style="transform:translateY(1.40px) scaleX(0.900)">8640Hz</span></div>
<div class="c box" style="left:840.65px;top:468.80px;width:45.30px;height:20.40px;font-size:10.00px;"><span style="transform:translateY(1.40px) scaleX(0.900)">-3.0dB</span></div>
<div class="c box" style="left:840.65px;top:495.40px;width:45.30px;height:20.40px;font-size:10.00px;"><span style="transform:translateY(1.40px) scaleX(0.920)">4.318</span></div>
<div class="a" style="left:889.10px;top:397.8px;width:45.5px;height:2.4px;border-radius:1.2px;background:#e0c070"></div>
<div class="c " style="left:889.10px;top:402.00px;width:45.50px;height:12.00px;font-size:10.30px;color:#e2e2e4;-webkit-text-stroke:0.3px #e2e2e4"><span style="transform:translateY(1.20px) scaleX(0.900)">15</span></div>
<div class="c box" style="left:889.10px;top:415.40px;width:45.30px;height:20.40px;font-size:10.00px;"><span style="transform:translateY(1.40px) scaleX(0.860)">Peaking</span></div>
<div class="c box" style="left:889.10px;top:442.10px;width:45.30px;height:20.40px;font-size:10.00px;"><span style="transform:translateY(1.40px) scaleX(0.900)">10560Hz</span></div>
<div class="c box" style="left:889.10px;top:468.80px;width:45.30px;height:20.40px;font-size:10.00px;"><span style="transform:translateY(1.40px) scaleX(0.900)">-3.0dB</span></div>
<div class="c box" style="left:889.10px;top:495.40px;width:45.30px;height:20.40px;font-size:10.00px;"><span style="transform:translateY(1.40px) scaleX(0.920)">4.318</span></div>
<div class="a" style="left:937.55px;top:397.8px;width:45.5px;height:2.4px;border-radius:1.2px;background:#e06040"></div>
<div class="c " style="left:937.55px;top:402.00px;width:45.50px;height:12.00px;font-size:10.30px;color:#e2e2e4;-webkit-text-stroke:0.3px #e2e2e4"><span style="transform:translateY(1.20px) scaleX(0.900)">16</span></div>
<div class="c box" style="left:937.55px;top:415.40px;width:45.30px;height:20.40px;font-size:10.00px;"><span style="transform:translateY(1.40px) scaleX(0.860)">Peaking</span></div>
<div class="c box" style="left:937.55px;top:442.10px;width:45.30px;height:20.40px;font-size:10.00px;"><span style="transform:translateY(1.40px) scaleX(0.900)">13440Hz</span></div>
<div class="c box" style="left:937.55px;top:468.80px;width:45.30px;height:20.40px;font-size:10.00px;"><span style="transform:translateY(1.40px) scaleX(0.900)">-3.0dB</span></div>
<div class="c box" style="left:937.55px;top:495.40px;width:45.30px;height:20.40px;font-size:10.00px;"><span style="transform:translateY(1.40px) scaleX(0.920)">4.318</span></div>
<div class="t" style="left:181.20px;top:420.70px;font-size:10.30px;transform:scaleX(0.900);color:#9c9ca1">Type</div>
<div class="t" style="left:181.20px;top:447.40px;font-size:10.30px;transform:scaleX(0.900);color:#9c9ca1">Cutoff</div>
<div class="t" style="left:181.20px;top:474.10px;font-size:10.30px;transform:scaleX(0.900);color:#9c9ca1">Gain</div>
<div class="t" style="left:181.20px;top:500.70px;font-size:10.30px;transform:scaleX(0.900);color:#9c9ca1">Q</div>
<div class="t" style="left:195.80px;top:554.00px;font-size:9.60px;transform:scaleX(0.850);color:#eeeeee;font-weight:700;-webkit-text-stroke:0.15px #eeeeee">Delay</div>
<div class="c md" style="left:175.00px;top:577.00px;width:48.60px;height:12.00px;font-size:10.30px;color:#acacb0"><span style="transform:translateY(1.30px) scaleX(0.873)">L</span></div>
<div class="c box" style="left:175.00px;top:589.20px;width:48.60px;height:19.60px;font-size:10.00px;"><span style="transform:translateY(1.80px) scaleX(0.940)">0.00ms</span></div>
<div class="c md" style="left:225.90px;top:577.00px;width:48.60px;height:12.00px;font-size:10.30px;color:#acacb0"><span style="transform:translateY(1.30px) scaleX(0.873)">R</span></div>
<div class="c box" style="left:225.90px;top:589.20px;width:48.60px;height:19.60px;font-size:10.00px;"><span style="transform:translateY(1.80px) scaleX(0.940)">0.00ms</span></div>
<div class="c md" style="left:276.80px;top:577.00px;width:48.60px;height:12.00px;font-size:10.30px;color:#acacb0"><span style="transform:translateY(1.30px) scaleX(0.873)">C</span></div>
<div class="c box" style="left:276.80px;top:589.20px;width:48.60px;height:19.60px;font-size:10.00px;"><span style="transform:translateY(1.80px) scaleX(0.940)">0.00ms</span></div>
<div class="c md" style="left:327.70px;top:577.00px;width:48.60px;height:12.00px;font-size:10.30px;color:#acacb0"><span style="transform:translateY(1.30px) scaleX(0.873)">LFE</span></div>
<div class="c box" style="left:327.70px;top:589.20px;width:48.60px;height:19.60px;font-size:10.00px;"><span style="transform:translateY(1.80px) scaleX(0.940)">0.00ms</span></div>
<div class="c md" style="left:378.60px;top:577.00px;width:48.60px;height:12.00px;font-size:10.30px;color:#acacb0"><span style="transform:translateY(1.30px) scaleX(0.873)">Ls</span></div>
<div class="c box" style="left:378.60px;top:589.20px;width:48.60px;height:19.60px;font-size:10.00px;"><span style="transform:translateY(1.80px) scaleX(0.940)">0.00ms</span></div>
<div class="c md" style="left:429.50px;top:577.00px;width:48.60px;height:12.00px;font-size:10.30px;color:#acacb0"><span style="transform:translateY(1.30px) scaleX(0.873)">Rs</span></div>
<div class="c box" style="left:429.50px;top:589.20px;width:48.60px;height:19.60px;font-size:10.00px;"><span style="transform:translateY(1.80px) scaleX(0.940)">0.00ms</span></div>
<div class="c md" style="left:480.40px;top:577.00px;width:48.60px;height:12.00px;font-size:10.30px;color:#acacb0"><span style="transform:translateY(1.30px) scaleX(0.873)">Lrs</span></div>
<div class="c box" style="left:480.40px;top:589.20px;width:48.60px;height:19.60px;font-size:10.00px;"><span style="transform:translateY(1.80px) scaleX(0.940)">0.00ms</span></div>
<div class="c md" style="left:531.30px;top:577.00px;width:48.60px;height:12.00px;font-size:10.30px;color:#acacb0"><span style="transform:translateY(1.30px) scaleX(0.873)">Rrs</span></div>
<div class="c box" style="left:531.30px;top:589.20px;width:48.60px;height:19.60px;font-size:10.00px;"><span style="transform:translateY(1.80px) scaleX(0.940)">0.00ms</span></div>
<div class="c md" style="left:582.20px;top:577.00px;width:48.60px;height:12.00px;font-size:10.30px;color:#acacb0"><span style="transform:translateY(1.30px) scaleX(0.873)">Ltf</span></div>
<div class="c box" style="left:582.20px;top:589.20px;width:48.60px;height:19.60px;font-size:10.00px;"><span style="transform:translateY(1.80px) scaleX(0.940)">0.00ms</span></div>
<div class="c md" style="left:633.10px;top:577.00px;width:48.60px;height:12.00px;font-size:10.30px;color:#acacb0"><span style="transform:translateY(1.30px) scaleX(0.873)">Rtf</span></div>
<div class="c box" style="left:633.10px;top:589.20px;width:48.60px;height:19.60px;font-size:10.00px;"><span style="transform:translateY(1.80px) scaleX(0.940)">0.00ms</span></div>
<div class="c md" style="left:684.00px;top:577.00px;width:48.60px;height:12.00px;font-size:10.30px;color:#acacb0"><span style="transform:translateY(1.30px) scaleX(0.873)">Ltr</span></div>
<div class="c box" style="left:684.00px;top:589.20px;width:48.60px;height:19.60px;font-size:10.00px;"><span style="transform:translateY(1.80px) scaleX(0.940)">0.00ms</span></div>
<div class="c md" style="left:734.90px;top:577.00px;width:48.60px;height:12.00px;font-size:10.30px;color:#acacb0"><span style="transform:translateY(1.30px) scaleX(0.873)">Rtr</span></div>
<div class="c box" style="left:734.90px;top:589.20px;width:48.60px;height:19.60px;font-size:10.00px;"><span style="transform:translateY(1.80px) scaleX(0.940)">0.00ms</span></div>
<div class="c md" style="left:785.80px;top:577.00px;width:48.60px;height:12.00px;font-size:10.30px;color:#acacb0"><span style="transform:translateY(1.30px) scaleX(0.873)">Speaker A L</span></div>
<div class="c box" style="left:785.80px;top:589.20px;width:48.60px;height:19.60px;font-size:10.00px;"><span style="transform:translateY(1.80px) scaleX(0.940)">0.00ms</span></div>
<div class="c md" style="left:836.70px;top:577.00px;width:48.60px;height:12.00px;font-size:10.30px;color:#acacb0"><span style="transform:translateY(1.30px) scaleX(0.873)">Speaker A R</span></div>
<div class="c box" style="left:836.70px;top:589.20px;width:48.60px;height:19.60px;font-size:10.00px;"><span style="transform:translateY(1.80px) scaleX(0.940)">0.00ms</span></div>
<div class="c md" style="left:887.60px;top:577.00px;width:48.60px;height:12.00px;font-size:10.30px;color:#acacb0"><span style="transform:translateY(1.30px) scaleX(0.873)">Speaker B L</span></div>
<div class="c box" style="left:887.60px;top:589.20px;width:48.60px;height:19.60px;font-size:10.00px;"><span style="transform:translateY(1.80px) scaleX(0.940)">0.00ms</span></div>
<div class="c md" style="left:938.50px;top:577.00px;width:48.60px;height:12.00px;font-size:10.30px;color:#acacb0"><span style="transform:translateY(1.30px) scaleX(0.873)">Speaker ...</span></div>
<div class="c box" style="left:938.50px;top:589.20px;width:48.60px;height:19.60px;font-size:10.00px;"><span style="transform:translateY(1.80px) scaleX(0.940)">0.00ms</span></div>
</div></body></html>
